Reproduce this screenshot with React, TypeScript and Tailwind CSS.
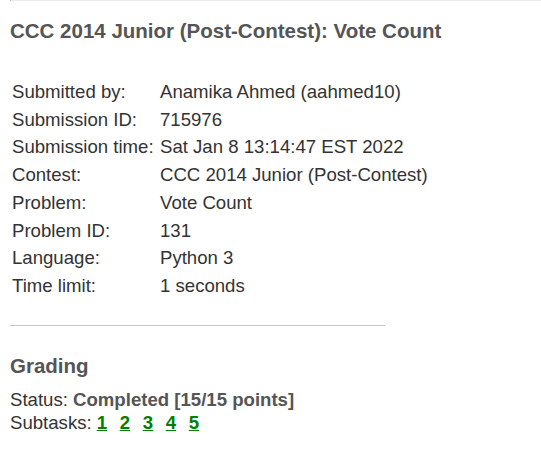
export default function App() {
  const info: [string, string][] = [
    ["Submitted by:", "Anamika Ahmed (aahmed10)"],
    ["Submission ID:", "715976"],
    ["Submission time:", "Sat Jan 8 13:14:47 EST 2022"],
    ["Contest:", "CCC 2014 Junior (Post-Contest)"],
    ["Problem:", "Vote Count"],
    ["Problem ID:", "131"],
    ["Language:", "Python 3"],
    ["Time limit:", "1 seconds"],
  ];

  return (
    <div className="min-h-screen bg-white font-['Liberation_Sans',Arial,sans-serif] text-[#333]">
      {/* bottom edge of the box above */}
      <div className="ml-[10px] h-px border-l border-[#bbb] bg-[#eaeaea]" />

      <div className="px-[10px]">
        <h2 className="mt-[18px] text-[20.5px] font-bold leading-[24px] text-[#555]">
          CCC 2014 Junior (Post-Contest): Vote Count
        </h2>

        <div className="mt-[35px] grid grid-cols-[148px_1fr] pl-[2px] text-[18.6px] leading-[27.7px]">
          {info.map(([label, value]) => (
            <div key={label} className="contents">
              <div className="whitespace-nowrap">{label}</div>
              <div className="whitespace-nowrap">{value}</div>
            </div>
          ))}
        </div>

        <hr className="mt-[25px] w-[375px] border-t border-[#c4c4c4]" />

        <h3 className="mt-[28px] text-[20.5px] font-bold leading-[24px] text-[#555]">Grading</h3>

        <div className="mt-[10px] text-[18.6px] leading-[23px]">
          <div>
            Status: <span className="font-bold text-[#555]">Completed [15/15 points]</span>
          </div>
          <div className="flex">
            <span className="mr-[5px]">Subtasks:</span>
            {[1, 2, 3, 4, 5].map((n) => (
              <a key={n} href="#" className="mr-[12.7px] font-bold text-[#008000] underline">
                {n}
              </a>
            ))}
          </div>
        </div>
      </div>
    </div>
  );
}
